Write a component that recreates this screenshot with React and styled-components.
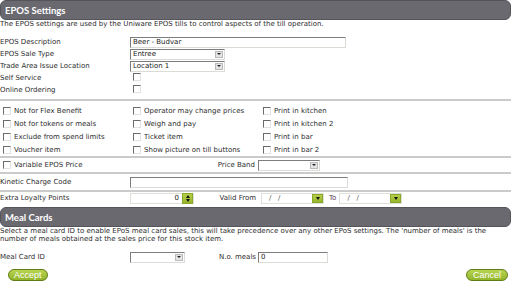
import React from "react";
import styled, { createGlobalStyle } from "styled-components";

const GlobalStyle = createGlobalStyle`
  html, body { margin: 0; padding: 0; background: #fff; }
  body {
    font-family: "DejaVu Sans", Verdana, sans-serif;
    font-size: 7px;
    color: #2e2e2e;
  }
`;

const Page = styled.div`
  width: 511px;
  height: 284px;
  overflow: hidden;
  box-sizing: border-box;
`;

const SectionHeader = styled.div`
  height: 20px;
  box-sizing: border-box;
  display: flex;
  align-items: center;
  padding-left: 4px;
  background: #6a6970;
  border: 1px solid #55545b;
  border-radius: 6px;
  color: #fff;
  font-family: Lato, "DejaVu Sans", sans-serif;
  font-weight: 700;
  font-size: 9.5px;
  margin-top: ${p => p.gap || 0}px;
`;

const Note = styled.div`
  line-height: 8px;
  white-space: nowrap;
`;

const Fields = styled.div`
  margin-top: 8px;
`;

const Field = styled.div`
  display: grid;
  grid-template-columns: 130px auto;
  align-items: center;
  height: ${p => p.h || 12}px;
`;

const Label = styled.div`
  white-space: nowrap;
`;

const SideLabel = styled.div`
  white-space: nowrap;
  text-align: right;
  padding-right: ${p => p.pr ?? 5}px;
`;

const TextBox = styled.div`
  box-sizing: border-box;
  width: ${p => p.w}px;
  height: 11px;
  display: flex;
  align-items: center;
  justify-content: ${p => (p.right ? "flex-end" : "flex-start")};
  padding: 0 2px;
  background: #fff;
  border-top: 1px solid #7d7d7d;
  border-left: 1px solid #7d7d7d;
  border-right: 1px solid #dcdcd6;
  border-bottom: 1px solid #dcdcd6;
  color: #222;
  white-space: nowrap;
`;

const SelectBox = styled(TextBox)`
  justify-content: space-between;
  padding-right: 1px;
`;

const DropButton = styled.span`
  width: 8px;
  height: 7px;
  box-sizing: border-box;
  background: #e4e4e4;
  border: 1px solid #b9b9b9;
  display: flex;
  align-items: center;
  justify-content: center;
  &::after {
    content: "";
    border-left: 2px solid transparent;
    border-right: 2px solid transparent;
    border-top: 2px solid #222;
  }
`;

const Check = styled.span`
  display: inline-block;
  width: 8px;
  height: 8px;
  box-sizing: border-box;
  background: #fff;
  border-top: 1px solid #6b6b6b;
  border-left: 1px solid #6b6b6b;
  border-right: 1px solid #e2e2e2;
  border-bottom: 1px solid #e2e2e2;
  flex: none;
`;

const Rule = styled.div`
  height: 2px;
  background: #cbcbcb;
  margin-top: ${p => p.gap || 0}px;
`;

const CheckGrid = styled.div`
  display: grid;
  grid-template-columns: 130px 130px auto;
  grid-auto-rows: 13px;
  padding-top: 3px;
`;

const CheckItem = styled.label`
  display: flex;
  align-items: center;
  gap: 3px;
  padding-left: 3px;
  white-space: nowrap;
`;

const PriceRow = styled.div`
  display: grid;
  grid-template-columns: 130px 128px auto;
  align-items: center;
  height: 14px;
`;

const WideRow = styled.div`
  display: grid;
  grid-template-columns: 130px 53px 78px repeat(3, max-content);
  justify-content: start;
  align-items: center;
  height: 12px;
`;

const MealRow = styled.div`
  display: grid;
  grid-template-columns: 130px 55px 73px auto;
  align-items: center;
  height: 12px;
  margin-top: 8px;
`;

const GreenBox = styled.span`
  width: 11px;
  height: ${p => p.h || 9}px;
  box-sizing: border-box;
  background: linear-gradient(#b6cf4a, #97b52b);
  border: 1px solid #8aa82a;
  display: flex;
  flex-direction: column;
  align-items: center;
  justify-content: center;
  gap: 1px;
  flex: none;
`;

const Arrow = styled.span`
  width: 0;
  height: 0;
  border-left: 2.5px solid transparent;
  border-right: 2.5px solid transparent;
  border-${p => (p.up ? "bottom" : "top")}: 3px solid #111;
`;

const SpinBox = styled(TextBox)`
  padding-right: 0;
  gap: 3px;
  border: 1px solid #e0e0da;
`;

const DateBox = styled(TextBox)`
  justify-content: space-between;
  padding: 0 0 0 7px;
  border: 1px solid #e0e0da;
  color: #555;
`;

const ToLabel = styled.span`
  padding: 0 3px 0 5px;
  color: #5a3d5a;
`;

const ButtonBar = styled.div`
  display: flex;
  justify-content: space-between;
  align-items: center;
  margin-top: 6px;
  padding: 0 3px 0 8px;
`;

const PillButton = styled.button`
  height: 12px;
  padding: 0 ${p => p.px || 5}px;
  border-radius: 7px;
  border: 1px solid #5f7d16;
  background: linear-gradient(#b8d452, #93b52a);
  color: #fff;
  font-family: "Liberation Sans", Arial, sans-serif;
  font-size: 9px;
  line-height: 10px;
  cursor: pointer;
`;

const DateField = () => (
  <DateBox w={63}>
    <span>/&nbsp;&nbsp;&nbsp;/</span>
    <GreenBox h={9}>
      <Arrow />
    </GreenBox>
  </DateBox>
);

const checks = [
  ["Not for Flex Benefit", "Operator may change prices", "Print in kitchen"],
  ["Not for tokens or meals", "Weigh and pay", "Print in kitchen 2"],
  ["Exclude from spend limits", "Ticket item", "Print in bar"],
  ["Voucher item", "Show picture on till buttons", "Print in bar 2"],
];

export default function App() {
  return (
    <Page>
      <GlobalStyle />
      <SectionHeader>EPOS Settings</SectionHeader>
      <Note>The EPOS settings are used by the Uniware EPOS tills to control aspects of the till operation.</Note>

      <Fields>
        <Field>
          <Label>EPOS Description</Label>
          <TextBox w={216}>Beer - Budvar</TextBox>
        </Field>
        <Field>
          <Label>EPOS Sale Type</Label>
          <SelectBox w={95}>Entree<DropButton /></SelectBox>
        </Field>
        <Field>
          <Label>Trade Area Issue Location</Label>
          <SelectBox w={95}>Location 1<DropButton /></SelectBox>
        </Field>
        <Field>
          <Label>Self Service</Label>
          <div><Check style={{ marginLeft: 3 }} /></div>
        </Field>
        <Field>
          <Label>Online Ordering</Label>
          <div><Check style={{ marginLeft: 3 }} /></div>
        </Field>
      </Fields>

      <Rule gap={3} />
      <CheckGrid>
        {checks.flat().map(text => (
          <CheckItem key={text}>
            <Check />
            {text}
          </CheckItem>
        ))}
      </CheckGrid>

      <Rule />
      <PriceRow>
        <CheckItem>
          <Check />
          Variable EPOS Price
        </CheckItem>
        <SideLabel pr={3}>Price Band</SideLabel>
        <SelectBox w={62}>
          <span />
          <DropButton />
        </SelectBox>
      </PriceRow>

      <Rule />
      <Field h={16}>
        <Label>Kinetic Charge Code</Label>
        <TextBox w={218} />
      </Field>

      <Rule />
      <WideRow>
        <Label>Extra Loyalty Points</Label>
        <SpinBox w={64} right>
          0
          <GreenBox h={11}>
            <Arrow up />
            <Arrow />
          </GreenBox>
        </SpinBox>
        <SideLabel pr={5}>Valid From</SideLabel>
        <DateField />
        <ToLabel>To</ToLabel>
        <DateField />
      </WideRow>

      <SectionHeader gap={3}>Meal Cards</SectionHeader>
      <Note>
        Select a meal card ID to enable EPoS meal card sales, this will take precedence over any other EPoS settings. The 'number of meals' is the
        <br />
        number of meals obtained at the sales price for this stock item.
      </Note>

      <MealRow>
        <Label>Meal Card ID</Label>
        <SelectBox w={55}>
          <span />
          <DropButton />
        </SelectBox>
        <SideLabel pr={2}>N.o. meals</SideLabel>
        <TextBox w={70}>0</TextBox>
      </MealRow>

      <ButtonBar>
        <PillButton px={5}>Accept</PillButton>
        <PillButton px={6}>Cancel</PillButton>
      </ButtonBar>
    </Page>
  );
}
